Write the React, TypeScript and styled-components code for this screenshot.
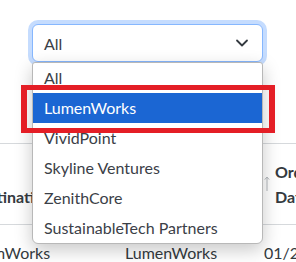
import styled, { createGlobalStyle } from 'styled-components';

const GlobalStyle = createGlobalStyle`
    body {
        margin: 0;
        background: #ffffff;
        font-family: Lato, "Noto Sans", sans-serif;
        color: #343a40;
        overflow: hidden;
    }
`;

const Page = styled.div`
    position: relative;
    width: 296px;
    height: 262px;
    overflow: hidden;
`;

const FilterArea = styled.div`
    padding: 24px 0 0 32px;
    height: 143px;
    box-sizing: border-box;
`;

const SelectWrap = styled.div`
    position: relative;
    width: 231px;
    z-index: 2;
`;

const SelectBox = styled.div`
    box-sizing: border-box;
    height: 38px;
    display: flex;
    align-items: center;
    justify-content: space-between;
    padding: 0 12px 0 11px;
    border: 1px solid #86b7fe;
    border-radius: 6px;
    box-shadow: 0 0 0 4px #c5dcfe;
    background: #fff;
    font-size: 16px;
    color: #3b4047;
`;

const Dropdown = styled.ul`
    position: absolute;
    top: 38px;
    left: 0;
    width: 231px;
    box-sizing: border-box;
    margin: 0;
    padding: 0;
    list-style: none;
    background: #fff;
    border: 1px solid #b8b8b8;
    border-radius: 3px 3px 6px 6px;
    box-shadow: 0 6px 18px rgba(0, 0, 0, 0.22);
`;

const Option = styled.li<{ $active?: boolean }>`
    height: 30px;
    line-height: 29px;
    padding-left: 11px;
    font-size: 16px;
    color: ${p => (p.$active ? '#ffffff' : '#3b4047')};
    background: ${p => (p.$active ? '#1b66d3' : 'transparent')};
    white-space: nowrap;
`;

const Highlight = styled.div`
    position: absolute;
    left: 21px;
    top: 85px;
    width: 254px;
    height: 48px;
    box-sizing: border-box;
    border: 5px solid #e41e26;
    border-left-width: 6px;
    border-right-width: 6px;
    z-index: 3;
    pointer-events: none;
`;

const TableWrap = styled.div`
    margin-left: -50px;
    width: 386px;
`;

const Table = styled.table`
    border-collapse: collapse;
    table-layout: fixed;
    width: 386px;
    border-top: 1px solid #d6d9dc;
`;

const HeadCell = styled.th<{ $w: number }>`
    width: ${p => p.$w}px;
    padding: 15px 8px;
    vertical-align: bottom;
    text-align: left;
    font-size: 16px;
    font-weight: 700;
    line-height: 25px;
    color: #343a40;
    border-bottom: 1px solid #d6d9dc;
`;

const HeadInner = styled.div`
    display: flex;
    align-items: center;
    gap: 5px;
`;

const Cell = styled.td`
    padding: 15px 8px;
    font-size: 16px;
    line-height: 25px;
    color: #343a40;
    white-space: nowrap;
    overflow: hidden;
`;

const Chevron = () => (
    <svg width="16" height="12" viewBox="0 0 16 12">
        <path d="M3 3.5l5 5 5-5" fill="none" stroke="#343a40" strokeWidth="1.8" strokeLinecap="round" strokeLinejoin="round" />
    </svg>
);

const SortArrow = () => (
    <svg width="6" height="16" viewBox="0 0 6 16" style={{ flex: 'none' }}>
        <path d="M3 1v14M0.8 3.6L3 1l2.2 2.6" fill="none" stroke="#b4b8bc" strokeWidth="1" />
    </svg>
);

const options = ['All', 'LumenWorks', 'VividPoint', 'Skyline Ventures', 'ZenithCore', 'SustainableTech Partners'];

const App = () => (
    <Page>
        <GlobalStyle />
        <FilterArea>
            <SelectWrap>
                <SelectBox>
                    <span>All</span>
                    <Chevron />
                </SelectBox>
                <Dropdown>
                    {options.map(o => (
                        <Option key={o} $active={o === 'LumenWorks'}>{o}</Option>
                    ))}
                </Dropdown>
            </SelectWrap>
        </FilterArea>
        <Highlight />
        <TableWrap>
            <Table>
                <thead>
                    <tr>
                        <HeadCell $w={151}><HeadInner><SortArrow />Destination</HeadInner></HeadCell>
                        <HeadCell $w={123}><HeadInner><SortArrow />Supplier</HeadInner></HeadCell>
                        <HeadCell $w={64}><HeadInner><SortArrow />Order Date</HeadInner></HeadCell>
                    </tr>
                </thead>
                <tbody>
                    <tr>
                        <Cell>LumenWorks</Cell>
                        <Cell>LumenWorks</Cell>
                        <Cell>01/25/2024</Cell>
                    </tr>
                </tbody>
            </Table>
        </TableWrap>
    </Page>
);

export default App;
